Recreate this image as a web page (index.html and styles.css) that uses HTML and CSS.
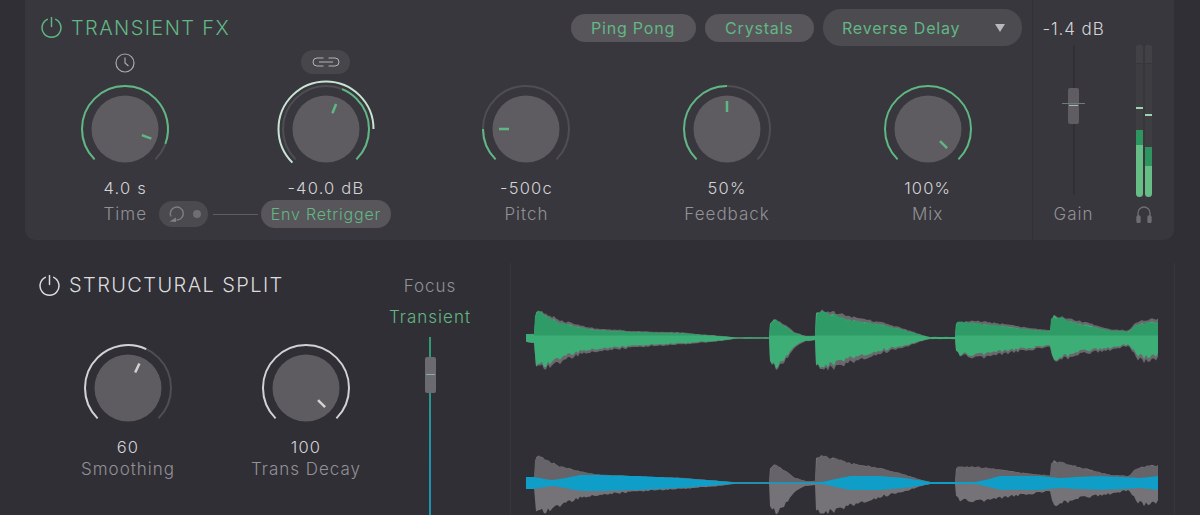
FILE: index.html
```html
<!DOCTYPE html>
<html>
<head>
    <title>Transient FX</title>
    <link rel="stylesheet" href="styles.css">
</head>
<body>
    <section class="fx">
        <div class="fx-main">
            <div class="fx-head">
                <svg class="power on" viewBox="0 0 20 20"><path d="M6 2.200a9 9 0 1 0 8 0"/><path d="M10 .5v8.500"/></svg>
                <h2 class="title on-text">TRANSIENT FX</h2>
                <div class="presets">
                    <span class="pill">Ping Pong</span>
                    <span class="pill">Crystals</span>
                    <span class="pill select">Reverse Delay<i class="arrow"></i></span>
                </div>
            </div>
            <div class="knob-row">
                <div class="cell">
                    <div class="knob-top">
                        <svg class="clock" viewBox="0 0 20 20"><circle cx="10" cy="10" r="9"/><path d="M10 4.500V10l3.500 3"/></svg>
                    </div>
                    <svg class="knob green" viewBox="0 0 104 104">
                        <circle class="disc" cx="52" cy="52" r="33.5"/>
                        <path class="ring" d="M21.59 82.41A43 43 0 1 1 82.41 82.41"/>
                        <path class="arc" pathLength="270" stroke-dasharray="245 270" d="M21.59 82.41A43 43 0 1 1 82.41 82.41"/>
                        <line class="pointer" x1="52" y1="34" x2="52" y2="24" transform="rotate(110 52 52)"/>
                    </svg>
                    <div class="value">4.0 s</div>
                    <div class="label label-time">Time
                        <div class="retrig">
                            <span class="loop-pill">
                                <svg class="loop" viewBox="0 0 18 18"><path d="M4 11.500A6.500 6.500 0 1 1 9.500 15"/><path class="fill" d="M2.500 16.500L9 12.500V17Z"/></svg>
                                <i class="dot"></i>
                            </span>
                            <i class="wire"></i>
                        </div>
                    </div>
                </div>
                <div class="cell">
                    <div class="knob-top">
                        <span class="link-pill">
                            <svg class="chain" viewBox="0 0 28 10"><path d="M11.500 1H5a4 4 0 0 0 0 8h6.500"/><path d="M16.500 1H23a4 4 0 0 1 0 8h-6.500"/><path d="M7 5h14"/></svg>
                        </span>
                    </div>
                    <svg class="knob green" viewBox="0 0 104 104">
                        <circle class="disc" cx="52" cy="52" r="33.5"/>
                        <path class="ring" d="M21.59 82.41A43 43 0 1 1 82.41 82.41"/>
                        <path class="arc" pathLength="270" stroke-dasharray="0 157 113 270" d="M21.59 82.41A43 43 0 1 1 82.41 82.41"/>
                        <path class="arc-outer" pathLength="270" stroke-dasharray="225 270" d="M18.41 85.59A47.500 47.500 0 1 1 85.59 85.59"/>
                        <line class="pointer" x1="52" y1="35" x2="52" y2="25" transform="rotate(22 52 52)"/>
                    </svg>
                    <div class="value">-40.0 dB</div>
                    <div class="label"><span class="pill env">Env Retrigger</span></div>
                </div>
                <div class="cell">
                    <div class="knob-top"></div>
                    <svg class="knob green" viewBox="0 0 104 104">
                        <circle class="disc" cx="52" cy="52" r="33.5"/>
                        <path class="ring" d="M21.59 82.41A43 43 0 1 1 82.41 82.41"/>
                        <path class="arc" pathLength="270" stroke-dasharray="45 270" d="M21.59 82.41A43 43 0 1 1 82.41 82.41"/>
                        <line class="pointer" x1="52" y1="35" x2="52" y2="25" transform="rotate(-90 52 52)"/>
                    </svg>
                    <div class="value">-500c</div>
                    <div class="label">Pitch</div>
                </div>
                <div class="cell">
                    <div class="knob-top"></div>
                    <svg class="knob green" viewBox="0 0 104 104">
                        <circle class="disc" cx="52" cy="52" r="33.5"/>
                        <path class="ring" d="M21.59 82.41A43 43 0 1 1 82.41 82.41"/>
                        <path class="arc" pathLength="270" stroke-dasharray="135 270" d="M21.59 82.41A43 43 0 1 1 82.41 82.41"/>
                        <line class="pointer" x1="52" y1="35" x2="52" y2="24" transform="rotate(0 52 52)"/>
                    </svg>
                    <div class="value">50%</div>
                    <div class="label">Feedback</div>
                </div>
                <div class="cell">
                    <div class="knob-top"></div>
                    <svg class="knob green" viewBox="0 0 104 104">
                        <circle class="disc" cx="52" cy="52" r="33.5"/>
                        <path class="arc" d="M21.59 82.41A43 43 0 1 1 82.41 82.41"/>
                        <line class="pointer" x1="52" y1="35" x2="52" y2="25" transform="rotate(135 52 52)"/>
                    </svg>
                    <div class="value">100%</div>
                    <div class="label">Mix</div>
                </div>
            </div>
        </div>
        <div class="fx-out">
            <div class="gain">
                <div class="gain-value">-1.4 dB</div>
                <div class="fader">
                    <div class="thumb"><i class="cross"></i><i class="mark"></i></div>
                </div>
                <div class="label">Gain</div>
            </div>
            <div class="meter">
                <div class="bars">
                    <div class="bar">
                        <i class="peak" style="top: 62px"></i>
                        <i class="hot" style="height: 15px"></i>
                        <i class="level" style="height: 52px"></i>
                    </div>
                    <div class="bar">
                        <i class="peak" style="top: 69px"></i>
                        <i class="hot" style="height: 19px"></i>
                        <i class="level" style="height: 31px"></i>
                    </div>
                </div>
                <svg class="phones" viewBox="0 0 16 18"><path d="M2 12V8a6 6 0 0 1 12 0v4"/><rect x="1" y="11" width="3" height="6.500" rx="1"/><rect x="12" y="11" width="3" height="6.500" rx="1"/></svg>
            </div>
        </div>
    </section>

    <section class="split">
        <div class="split-left">
            <div class="split-head">
                <svg class="power" viewBox="0 0 20 20"><path d="M6 2.200a9 9 0 1 0 8 0"/><path d="M10 .5v8.500"/></svg>
                <h2 class="title">STRUCTURAL SPLIT</h2>
            </div>
            <div class="split-knobs">
                <div class="cell wide">
                    <svg class="knob white" viewBox="0 0 104 104">
                        <circle class="disc" cx="52" cy="52" r="33.5"/>
                        <path class="ring" d="M21.59 82.41A43 43 0 1 1 82.41 82.41"/>
                        <path class="arc" pathLength="270" stroke-dasharray="160 270" d="M21.59 82.41A43 43 0 1 1 82.41 82.41"/>
                        <line class="pointer" x1="52" y1="35" x2="52" y2="25" transform="rotate(25 52 52)"/>
                    </svg>
                    <div class="value">60</div>
                    <div class="label tight">Smoothing</div>
                </div>
                <div class="cell wide">
                    <svg class="knob white" viewBox="0 0 104 104">
                        <circle class="disc" cx="52" cy="52" r="33.5"/>
                        <path class="arc" d="M21.59 82.41A43 43 0 1 1 82.41 82.41"/>
                        <line class="pointer" x1="52" y1="35" x2="52" y2="25" transform="rotate(135 52 52)"/>
                    </svg>
                    <div class="value">100</div>
                    <div class="label tight">Trans Decay</div>
                </div>
            </div>
        </div>
        <div class="focus">
            <div class="label">Focus</div>
            <div class="label on-text">Transient</div>
            <div class="focus-line">
                <div class="thumb focus-thumb"><i class="mark"></i></div>
            </div>
        </div>
        <div class="waves">
            <svg id="wave" viewBox="511 263 663 252"></svg>
        </div>
    </section>

    <script src="wave.js"></script>
</body>
</html>
```

FILE: styles.css
```css
* {
    box-sizing: border-box;
}
body {
    margin: 0;
    width: 1200px;
    height: 515px;
    overflow: hidden;
    background: #302f35;
    color: #d4d3d6;
    font-family: Inter, "Liberation Sans", sans-serif;
}
i {
    display: block;
}
h2 {
    margin: 0;
}

/* top panel */
.fx {
    display: flex;
    width: 1149px;
    height: 240px;
    margin-left: 25px;
    background: #38373d;
    border-radius: 0 0 10px 10px;
}
.fx-main {
    width: 1007px;
    padding-right: 4px;
}
.fx-head {
    display: flex;
    align-items: center;
    height: 37px;
    margin: 9px 6px 4px 0;
    padding-left: 16px;
}
.power {
    width: 21px;
    height: 21px;
    fill: none;
    stroke: #dcdcde;
    stroke-width: 1.4;
    stroke-linecap: round;
}
.power.on {
    stroke: #5fb884;
}
.title {
    margin-left: 9px;
    font-size: 20px;
    font-weight: 300;
    letter-spacing: 1.4px;
    color: #dcdcde;
}
.on-text,
.label.on-text {
    color: #62b785;
}
.presets {
    display: flex;
    align-items: center;
    gap: 9px;
    margin-left: auto;
}
.pill {
    display: flex;
    align-items: center;
    height: 28px;
    padding: 0 20.5px;
    border-radius: 14px;
    background: #58565b;
    color: #62b785;
    font-size: 16px;
    letter-spacing: 0.8px;
}
.select {
    justify-content: space-between;
    width: 199px;
    height: 37px;
    border-radius: 18px;
    background: #4c4b50;
    padding: 0 17px 0 19px;
}
.arrow {
    border-left: 5.5px solid transparent;
    border-right: 5.5px solid transparent;
    border-top: 8px solid #b9b8bb;
}

/* knobs */
.knob-row {
    display: grid;
    grid-template-columns: repeat(5, 1fr);
}
.cell {
    display: flex;
    flex-direction: column;
    align-items: center;
}
.knob-top {
    display: flex;
    justify-content: center;
    align-items: center;
    height: 24px;
    margin-bottom: 3px;
}
.clock {
    width: 20px;
    height: 20px;
    margin-top: 2px;
    fill: none;
    stroke: #a9a8ab;
    stroke-width: 1.2;
}
.link-pill {
    display: flex;
    align-items: center;
    justify-content: center;
    width: 49px;
    height: 24px;
    border-radius: 12px;
    background: #47464b;
}
.chain {
    width: 28px;
    height: 10px;
    fill: none;
    stroke: #b4b3b6;
    stroke-width: 1;
}
.knob {
    display: block;
    width: 104px;
    height: 104px;
    fill: none;
    stroke-width: 2;
}
.disc {
    fill: #5e5c61;
}
.ring {
    stroke: #4f4e53;
}
.pointer {
    stroke-width: 2.5;
}
.green .arc,
.green .pointer {
    stroke: #5fb884;
}
.white .arc,
.white .pointer {
    stroke: #d2d2d3;
}
.arc-outer {
    stroke: #c9e4d3;
}
.value {
    height: 20px;
    margin-top: -3px;
    line-height: 20px;
    font-size: 16.5px;
    font-weight: 300;
    letter-spacing: 1.2px;
}
.label {
    display: flex;
    justify-content: center;
    align-items: center;
    height: 28px;
    margin-top: 2px;
    font-size: 17px;
    font-weight: 300;
    letter-spacing: 1px;
    color: #929195;
}
.label.tight {
    height: 22px;
    margin-top: 1px;
}
.label-time {
    position: relative;
}
.retrig {
    position: absolute;
    left: 55px;
    top: 1px;
    display: flex;
    align-items: center;
}
.loop-pill {
    display: flex;
    align-items: center;
    justify-content: space-between;
    width: 49px;
    height: 26px;
    padding: 0 7px 0 8px;
    border-radius: 13px;
    background: #4b4a4f;
}
.loop {
    width: 18px;
    height: 18px;
    fill: none;
    stroke: #807f83;
    stroke-width: 1.4;
}
.loop .fill {
    fill: #807f83;
    stroke: none;
}
.dot {
    width: 8px;
    height: 8px;
    border-radius: 50%;
    background: #6f6e72;
}
.wire {
    width: 45px;
    height: 1px;
    margin-left: 5px;
    background: #5e5d62;
}
.env {
    padding: 0 10px;
}

/* gain and meter */
.fx-out {
    display: flex;
    width: 142px;
    border-left: 1px solid #323136;
}
.gain {
    display: flex;
    flex-direction: column;
    align-items: center;
    width: 81px;
    padding-top: 19px;
}
.gain-value {
    height: 20px;
    line-height: 20px;
    font-size: 17px;
    font-weight: 300;
    letter-spacing: 0.9px;
}
.fader {
    position: relative;
    width: 2px;
    height: 150px;
    margin-top: 6px;
    background: #302f34;
}
.gain .label {
    margin-top: 5px;
}
.thumb {
    position: absolute;
    left: -5px;
    top: 43px;
    width: 11px;
    height: 36px;
    border-radius: 2px;
    background: #5f5d62;
}
.cross {
    position: absolute;
    left: -6px;
    right: -6px;
    top: 15px;
    height: 1px;
    background: #77767a;
}
.mark {
    position: absolute;
    left: 1px;
    right: 1px;
    top: 17px;
    height: 1px;
    background: #93c4a5;
}
.meter {
    display: flex;
    flex-direction: column;
    align-items: center;
    width: 60px;
    padding-top: 45px;
}
.bars {
    display: flex;
    gap: 2px;
}
.bar {
    position: relative;
    display: flex;
    flex-direction: column;
    justify-content: flex-end;
    width: 7px;
    height: 152px;
    border-radius: 3px 3px 4px 4px;
    background: linear-gradient(#424146 18px, #37363b 18px, #37363b 19px, #3e3d42 19px);
    overflow: hidden;
}
.peak {
    position: absolute;
    left: 0;
    right: 0;
    height: 2px;
    background: #9fd2b1;
}
.hot {
    background: #2f9560;
}
.level {
    background: #66bd86;
}
.phones {
    width: 16px;
    height: 18px;
    margin-top: 8px;
    fill: #6e6d72;
    stroke: #6e6d72;
    stroke-width: 1.3;
}
.phones path {
    fill: none;
}

/* lower section */
.split {
    display: flex;
    height: 275px;
}
.split-left {
    width: 395px;
    padding: 33px 0 0 40px;
}
.split-head {
    display: flex;
    align-items: center;
    height: 24px;
    margin: 0 0 39px -1px;
}
.split-head .title {
    margin-left: 9px;
}
.split-knobs {
    display: flex;
    margin-left: -1px;
}
.wide {
    width: 178px;
}
.focus {
    display: flex;
    flex-direction: column;
    align-items: center;
    width: 70px;
    padding-top: 32px;
}
.focus .label {
    margin-top: 0;
    height: 28px;
}
.focus .on-text {
    margin-top: 3px;
}
.focus-line {
    position: relative;
    flex: 1;
    width: 2px;
    margin-top: 6px;
    background: linear-gradient(#2f9c6c, #1e93b0 70%);
}
.focus-thumb {
    left: -4px;
    top: 20px;
    background: #6b6a70;
}
.focus-thumb .mark {
    background: #8fa9a6;
}
.waves {
    width: 665px;
    height: 252px;
    margin: 23px 0 0 45px;
    border-left: 1px solid #38373d;
    border-right: 1px solid #38373d;
}
#wave {
    display: block;
    width: 663px;
    height: 252px;
    filter: blur(0.4px);
}
```

FILE: wave.js
```js
// x, amount above centre, amount below centre
var shape = [
    [526, 4, 4], [534, 4, 5], [535, 26, 28], [538, 28, 32], [545, 24, 30], [560, 16, 22],
    [580, 11, 15], [600, 8, 12], [640, 6, 8], [680, 5, 6], [720, 2, 3], [735, 0.7, 0.7],
    [769, 0.7, 0.7], [770, 16, 26], [775, 19, 32], [785, 12, 22], [795, 5, 8], [805, 2, 3],
    [815, 2, 2], [816, 26, 30], [820, 28, 34], [850, 19, 23], [880, 14, 14], [905, 8, 8],
    [925, 2, 2], [930, 1, 1], [955, 1, 1], [956, 16, 14], [960, 17, 19], [990, 14, 17],
    [1020, 10, 12], [1050, 7, 8], [1051, 20, 20], [1054, 23, 24], [1080, 15, 15],
    [1110, 8, 11], [1129, 6.5, 7], [1136, 14, 18], [1145, 16, 22], [1158, 17, 19]
];
var blue = [
    [526, 6, 6], [534, 6, 6], [545, 4, 4], [553, 3, 3], [565, 5, 5], [580, 8, 8], [600, 8, 8],
    [640, 7, 7], [680, 5, 5], [720, 2, 2], [735, 0.7, 0.7], [815, 0.7, 0.7], [825, 1.5, 1.5],
    [835, 4, 4], [850, 7, 7], [880, 7, 7], [905, 5, 5], [925, 2, 2], [930, 1, 1], [975, 1, 1],
    [985, 3, 3], [1000, 7, 7], [1040, 7, 7], [1060, 5, 5], [1075, 6, 6], [1100, 7, 7],
    [1125, 6, 6], [1140, 5, 5], [1158, 7, 7]
];
var hits = [535, 770, 816, 956, 1051];

function at(list, x, side) {
    for (var i = 1; i < list.length; i++) {
        if (x <= list[i][0]) {
            var a = list[i - 1], b = list[i];
            return a[side] + (b[side] - a[side]) * (x - a[0]) / (b[0] - a[0]);
        }
    }
    return list[list.length - 1][side];
}

function noise(x) {
    var n = Math.sin(x * 12.9898) * 43758.5453;
    return n - Math.floor(n);
}

// how far past the last hit we are, 0 to 1
function decayed(x) {
    var last = 526;
    hits.forEach(function (h) { if (x >= h) last = h; });
    return Math.min(1, (x - last) / 25);
}

// inner set: only the part of the upper half further than inner from the centre
function outline(list, cy, extra, rough, inner) {
    var top = [], bottom = [];
    var points = [];
    for (var s = inner ? 535 : 526; s < 1158; s += 2) points.push(s);
    hits.forEach(function (h) { points.push(h - 1); });
    points.push(1158);
    points.sort(function (a, b) { return a - b; });
    points.forEach(function (x) {
        var grow = 1 + extra * decayed(x);
        var up = at(list, x, 1) * grow * (1 - rough * noise(x));
        var down = at(list, x, 2) * grow * (1 - rough * 1.6 * noise(x + 91));
        top.push(x + ' ' + (cy - Math.max(up, inner || 0)).toFixed(1));
        bottom.unshift(x + ' ' + (inner ? cy - inner : cy + down).toFixed(1));
    });
    return 'M' + top.concat(bottom).join('L') + 'Z';
}

function add(d, color) {
    var p = document.createElementNS('http://www.w3.org/2000/svg', 'path');
    p.setAttribute('d', d);
    p.setAttribute('fill', color);
    document.getElementById('wave').appendChild(p);
}

// upper lane
add(outline(shape, 338, 0.2, 0.12), '#6a686d');
add(outline(shape, 338, 0, 0.14), '#3cae76');
add(outline(shape, 338, 0, 0.14, 2.5), '#2f9c67');

// lower lane
add(outline(shape, 483, 0.1, 0.12), '#757378');
add(outline(shape, 483, 0.1, 0.12, 0.5), '#666469');
add(outline(blue, 483, 0, 0.02), '#0f9ec8');
```
